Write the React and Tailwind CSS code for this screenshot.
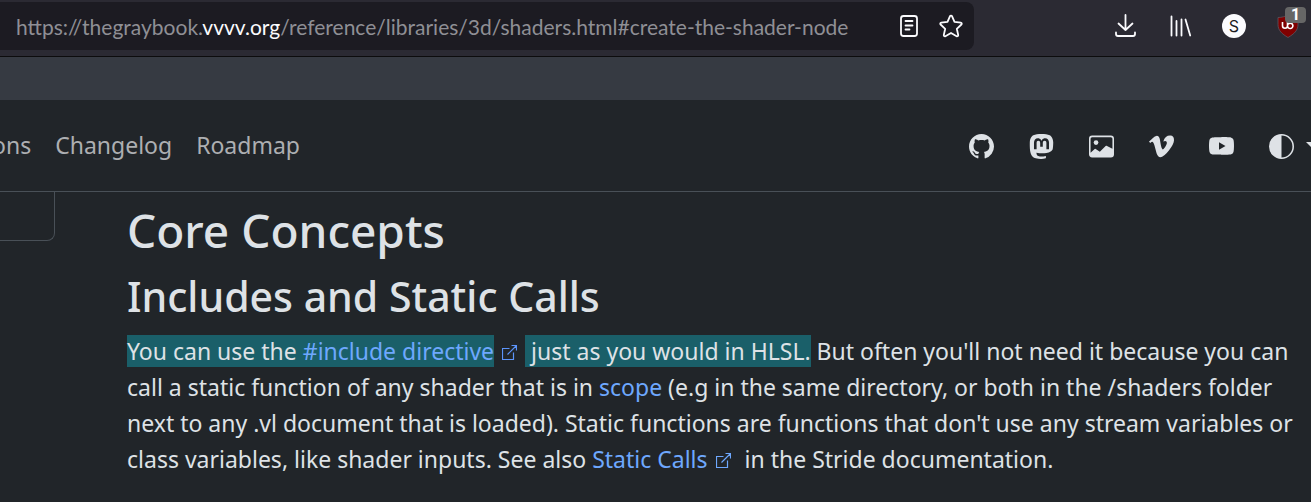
import { BsCircleHalf, BsGithub, BsImage, BsMastodon, BsVimeo, BsYoutube } from 'react-icons/bs'

const socialLinks = [
    { label: 'GitHub', icon: BsGithub },
    { label: 'Mastodon', icon: BsMastodon },
    { label: 'Gallery', icon: BsImage },
    { label: 'Vimeo', icon: BsVimeo },
    { label: 'YouTube', icon: BsYoutube },
]

const ReaderIcon = () => (
    <svg className="size-6" viewBox="0 0 24 24" fill="none" stroke="currentColor" strokeWidth="1.8" strokeLinecap="round">
        <rect x="4" y="2" width="16" height="20" rx="2.5" />
        <path d="M8.500 7h7M8.500 11.500h7M8.500 15.500h4" />
    </svg>
)

const StarIcon = () => (
    <svg className="size-6" viewBox="0 0 24 24" fill="none" stroke="currentColor" strokeWidth="1.8" strokeLinecap="round" strokeLinejoin="round">
        <path d="M11 2.200a1.100 1.100 0 0 1 2 0l2.500 5.700 6.300.7a1.100 1.100 0 0 1 .6 1.900l-4.600 4.300 1.400 6.200a1.100 1.100 0 0 1-1.600 1.200L12 19l-5.600 3.200a1.100 1.100 0 0 1-1.600-1.200l1.400-6.200-4.600-4.300a1.100 1.100 0 0 1 .6-1.900l6.300-.7z" />
    </svg>
)

const DownloadIcon = () => (
    <svg className="size-6" viewBox="0 0 24 24" fill="none" stroke="currentColor" strokeWidth="1.8" strokeLinecap="round" strokeLinejoin="round">
        <path d="M11.500 1v15M4.500 9.500l7 6.500 7-6.500M2 18.500v1.500a2 2 0 0 0 2 2h15a2 2 0 0 0 2-2v-1.500" />
    </svg>
)

const LibraryIcon = () => (
    <svg className="size-6" viewBox="0 0 24 24" fill="none" stroke="currentColor" strokeWidth="1.8" strokeLinecap="round">
        <path d="M3.500 2.500v19M8.500 7v14.500M13.500 5.500v16M17.500 5.500l4.700 16" />
    </svg>
)

const ShieldIcon = () => (
    <svg className="size-6" viewBox="0 0 24 24" fill="none">
        <path d="M12 1c3 1.500 6 2.500 10 2.500v7c0 6-4 9.500-10 13C6 20 2 16.500 2 10.500v-7C6 3.500 9 2.500 12 1z" fill="#800000" stroke="#5c5660" strokeWidth="0.8" />
        <path d="M6.500 8v3.800a2.500 2.500 0 0 0 5 0V8M11.500 11.800a2.700 2.700 0 1 0 5.400 0a2.700 2.700 0 1 0-5.400 0" stroke="#fff" strokeWidth="1.600" />
    </svg>
)

const ExternalIcon = () => (
    <svg className="mr-2 ml-2 inline-block size-[15px] align-baseline" viewBox="0 0 15 15" fill="none" stroke="currentColor" strokeWidth="1.2">
        <path d="M7.500 3.500h-7v11h11V7.500M9.500.5h5v5M5.500 9.500l9-9" />
    </svg>
)

const BrowserBar = () => (
    <div className="flex items-center justify-between border-b border-[#0c0c0d] bg-[#2b2a33] pt-0.5 pb-1.5 text-[#fbfbfe]">
        <div className="flex h-12 w-[974px] items-center rounded-r-lg bg-[#1c1b22] pr-[11px] pl-4">
            <div className="flex-1 pt-0.5 whitespace-nowrap font-['Lato',sans-serif] text-[21px] text-[#8f8f95]">
                https://thegraybook.<span className="text-[#fbfbfe]">vvvv.org</span>
                /reference/libraries/3d/shaders.html#create-the-shader-node
            </div>
            <div className="flex items-center gap-[18px]">
                <button type="button" aria-label="Reader view"><ReaderIcon /></button>
                <button type="button" aria-label="Bookmark"><StarIcon /></button>
            </div>
        </div>
        <div className="flex items-center gap-[30px] pr-[11px]">
            <button type="button" aria-label="Downloads"><DownloadIcon /></button>
            <button type="button" aria-label="Library"><LibraryIcon /></button>
            <button type="button" className="flex size-6 items-center justify-center rounded-full bg-[#fbfbfe] font-['Inter',sans-serif] text-[16px] text-[#1c1b22]">S</button>
            <button type="button" aria-label="Blocked items" className="relative">
                <ShieldIcon />
                <span className="absolute -top-[7px] -right-1.5 flex h-4 w-[21px] items-center justify-center rounded-sm bg-[#666] font-['Roboto',sans-serif] text-[16px] font-bold text-white">1</span>
            </button>
        </div>
    </div>
)

const SiteHeader = () => (
    <header className="flex h-[92px] items-center justify-between overflow-hidden border-b border-[#495057] text-[#dee2e6]">
        <nav className="-ml-2 flex gap-6 text-[23px] text-[#adafb2]">
            <a href="#options">ons</a>
            <a href="#changelog">Changelog</a>
            <a href="#roadmap">Roadmap</a>
        </nav>
        <div className="flex items-center gap-[35px] pt-px">
            {socialLinks.map(({ label, icon: Icon }) => (
                <a key={label} href="#social" aria-label={label}><Icon size={25} /></a>
            ))}
            <button type="button" aria-label="Theme" className="-mr-[9px] flex items-center gap-3">
                <BsCircleHalf size={25} />
                <svg className="h-2 w-3.5" viewBox="0 0 14 8" fill="currentColor"><path d="M0 0h14L7 7z" /></svg>
            </button>
        </div>
    </header>
)

const Marked = ({ children }) => (
    <mark className="bg-[#1a5f69] text-inherit">{children}</mark>
)

const App = () => {
    return (
        <div className="min-h-screen overflow-hidden bg-[#212529] font-['Noto_Sans',sans-serif] text-[#dee2e6]">
            <BrowserBar />
            <div className="h-[43px] bg-[#363a42]" />
            <SiteHeader />
            <div className="flex items-start">
                <aside className="h-[49px] w-[55px] shrink-0 rounded-br-lg border-r border-b border-[#495057]" />
                <main className="flex-1 pt-2.5 pl-[72px] whitespace-nowrap">
                    <h2 className="text-[46px] leading-[56px] font-medium">Core Concepts</h2>
                    <h3 className="mt-2.5 text-[41px] leading-[56px] font-medium">Includes and Static Calls</h3>
                    <p className="mt-[9px] text-[23px] leading-[36px]">
                        <Marked>You can use the <a href="#include" className="text-[#6ea8fe]">#include directive</a></Marked>
                        <a href="#include" aria-label="Open" className="text-[#5c94fa]"><ExternalIcon /></a>
                        <Marked>&nbsp;just as you would in HLSL.</Marked> But often you'll not need it because you can
                        <br />
                        call a static function of any shader that is in <a href="#scope" className="text-[#6ea8fe]">scope</a> (e.g in the same directory, or both in the /shaders folder
                        <br />
                        next to any .vl document that is loaded). Static functions are functions that don't use any stream variables or
                        <br />
                        class variables, like shader inputs. See also <a href="#static-calls" className="text-[#6ea8fe]">Static Calls<ExternalIcon /></a> in the Stride documentation.
                    </p>
                </main>
            </div>
        </div>
    )
}

export default App
